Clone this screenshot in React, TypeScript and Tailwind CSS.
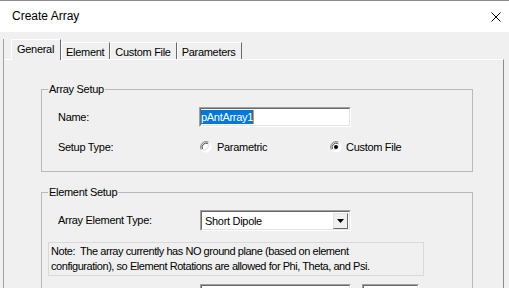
import React from "react";

// 古典的なWindowsダイアログ「Create Array」の再現

function Radio({ checked }: { checked?: boolean }) {
  return (
    <svg width="12" height="12" viewBox="0 0 12 12" className="shrink-0">
      <circle cx="6" cy="6" r="5.5" fill="#ffffff" />
      <path d="M1.3 8.4 A5.3 5.3 0 0 1 8.4 1.3" fill="none" stroke="#909090" strokeWidth="1.2" />
      <path d="M2.4 7.8 A4.2 4.2 0 0 1 7.8 2.4" fill="none" stroke="#404040" strokeWidth="1" />
      <path d="M8.4 1.3 A5.3 5.3 0 0 1 1.3 8.4" fill="none" stroke="#dcdcdc" strokeWidth="1" />
      {checked && <circle cx="6" cy="6" r="2" fill="#000000" />}
    </svg>
  );
}

function Sunken({ className, children }: { className?: string; children?: React.ReactNode }) {
  return (
    <div
      className={`border border-t-[#a0a0a0] border-l-[#a0a0a0] border-b-white border-r-white ${className ?? ""}`}
    >
      <div className="h-full border border-t-[#696969] border-l-[#696969] border-b-[#e3e3e3] border-r-[#e3e3e3] bg-white flex items-center">
        {children}
      </div>
    </div>
  );
}

function GroupBox({
  title,
  className,
  children,
}: {
  title: string;
  className?: string;
  children?: React.ReactNode;
}) {
  return (
    <div className={`relative border border-[#b9b9b9] ${className ?? ""}`}>
      <span className="absolute left-[6px] -top-[8px] bg-[#f0f0f0] px-px leading-[14px]">{title}</span>
      {children}
    </div>
  );
}

export default function App() {
  const tabs = ["General", "Element", "Custom File", "Parameters"];

  return (
    <div
      className="w-[509px] h-[288px] overflow-hidden bg-[#f0f0f0] text-black text-[11px] tracking-[-0.3px]"
      style={{ fontFamily: '"Liberation Sans", Arial, sans-serif' }}
    >
      {/* タイトルバー */}
      <div className="h-[32px] bg-white border-t border-[#8c8c8c] flex items-center justify-between pl-[12px] pr-[7px]">
        <span className="text-[12px] tracking-normal pb-[1px]">Create Array</span>
        <svg width="10" height="10" viewBox="0 0 10 10" className="mr-[1px]">
          <path d="M0.5 0.5 L9.5 9.5 M9.5 0.5 L0.5 9.5" stroke="#000" strokeWidth="1" />
        </svg>
      </div>

      {/* 本体 */}
      <div className="h-[256px] pl-[3px] pt-[7px]">
        <div className="h-full border-l border-[#a0a0a0] flex flex-col">
          {/* タブ */}
          <div className="flex items-end ml-[7px] h-[20px] relative z-10">
            {tabs.map((t, i) =>
              i === 0 ? (
                <div
                  key={t}
                  className="h-[21px] -mb-px bg-[#f0f0f0] border-t border-l border-white border-r border-r-[#696969] pl-[5px] pr-[6px] pt-[2px] leading-[14px]"
                >
                  {t}
                </div>
              ) : (
                <div
                  key={t}
                  className="h-[17px] border-t border-l border-white border-r border-r-[#696969] pl-[4px] pr-[5px] pt-[2px] leading-[14px]"
                >
                  {t}
                </div>
              )
            )}
          </div>

          {/* タブパネル */}
          <div className="flex-1 w-[500px] border-t border-white border-r border-r-[#8c8c8c] pl-[37px] pt-[29px]">
            <GroupBox title="Array Setup" className="w-[432px] h-[83px] pl-[16px] pt-[17px]">
              <div className="flex items-center h-[20px]">
                <span className="w-[141px]">Name:</span>
                <Sunken className="w-[152px] h-[20px]">
                  <span className="bg-[#0078d7] text-white leading-[14px] h-[14px]">pAntArray1</span>
                  <span className="w-px h-[14px] bg-[#ff8c1a]" />
                </Sunken>
              </div>
              <div className="flex items-center h-[16px] mt-[12px]">
                <span className="w-[142px]">Setup Type:</span>
                <div className="flex items-center gap-[5px] w-[130px]">
                  <Radio />
                  <span>Parametric</span>
                </div>
                <div className="flex items-center gap-[4px]">
                  <Radio checked />
                  <span>Custom File</span>
                </div>
              </div>
            </GroupBox>

            <GroupBox title="Element Setup" className="w-[432px] h-[120px] mt-[20px] pl-[16px] pt-[17px]">
              <div className="flex items-center h-[21px]">
                <span className="w-[142px]">Array Element Type:</span>
                <Sunken className="w-[151px] h-[21px]">
                  <span className="flex-1 pl-[3px] leading-[14px]">Short Dipole</span>
                  <div className="w-[15px] h-[16px] mr-px border border-t-[#e3e3e3] border-l-[#e3e3e3] border-b-[#696969] border-r-[#696969] bg-[#f0f0f0] flex items-center justify-center">
                    <svg width="7" height="4" viewBox="0 0 7 4">
                      <path d="M0 0 H7 L3.5 4 Z" fill="#000" />
                    </svg>
                  </div>
                </Sunken>
              </div>
              <div className="-ml-[10px] mt-[11px] w-[376px] h-[34px] border border-[#d9d9d9] pl-[2px] pt-[1px] leading-[15px] tracking-[-0.45px]">
                Note:&nbsp; The array currently has NO ground plane (based on element
                <br />
                configuration), so Element Rotations are allowed for Phi, Theta, and Psi.
              </div>
              <div className="flex mt-[8px] ml-[142px] gap-[11px]">
                <Sunken className="w-[151px] h-[21px]" />
                <Sunken className="w-[57px] h-[21px]" />
              </div>
            </GroupBox>
          </div>
        </div>
      </div>
    </div>
  );
}
